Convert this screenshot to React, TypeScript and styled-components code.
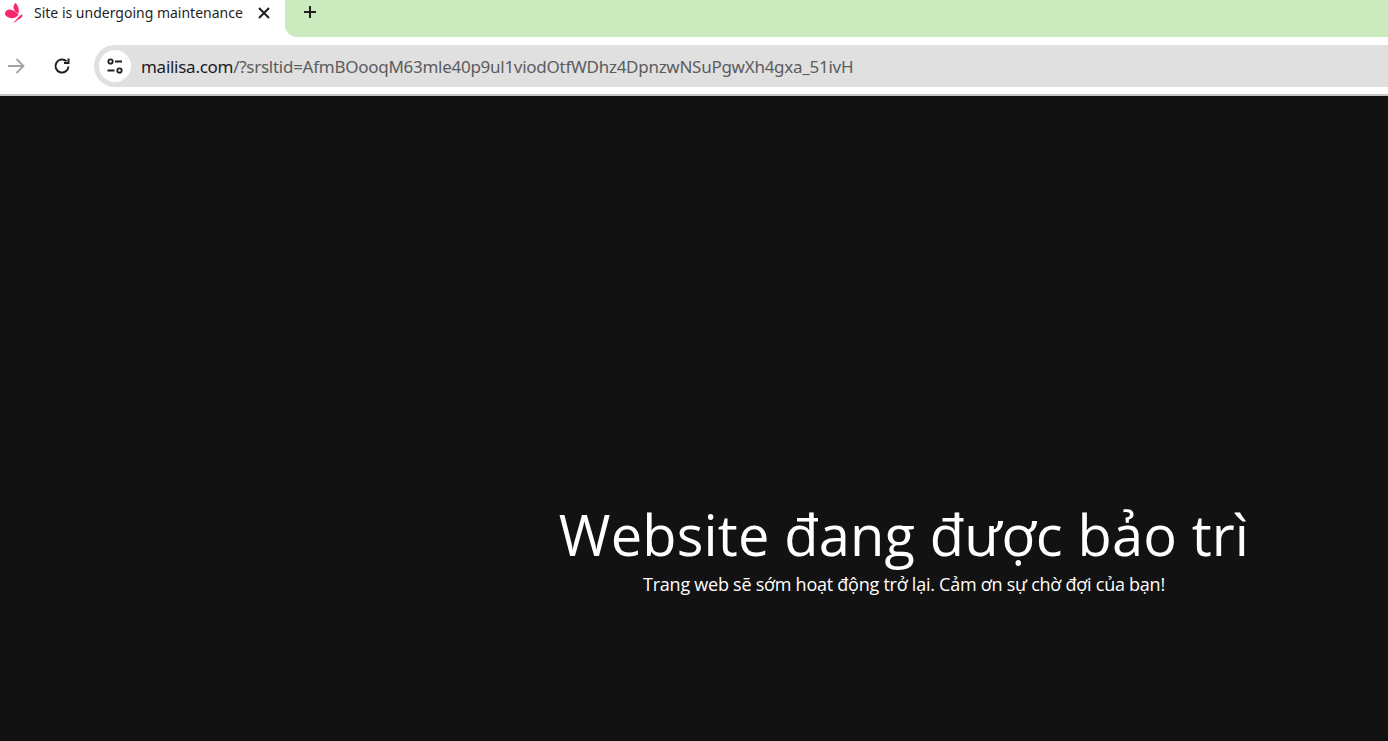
import React from 'react';
import styled, { createGlobalStyle } from 'styled-components';

const GlobalStyle = createGlobalStyle`
  html, body {
    margin: 0;
    padding: 0;
    height: 100%;
    background: #121212;
    overflow: hidden;
  }
`;

const Page = styled.div`
  width: 1388px;
  height: 741px;
  display: flex;
  flex-direction: column;
  font-family: 'Open Sans', sans-serif;
`;

const TabStrip = styled.div`
  height: 37px;
  background: #cbeabd;
  display: flex;
  align-items: flex-start;
`;

const ActiveTab = styled.div`
  position: relative;
  width: 285px;
  height: 37px;
  box-sizing: border-box;
  background: #fff;
  display: flex;
  align-items: center;
  padding: 0 14px 12px 5px;
`;

const TabCorner = styled.span`
  position: absolute;
  right: -12px;
  bottom: 0;
  width: 12px;
  height: 12px;
  background: #fff;

  &::after {
    content: '';
    position: absolute;
    inset: 0;
    background: #cbeabd;
    border-bottom-left-radius: 12px;
  }
`;

const TabTitle = styled.span`
  margin-left: 11px;
  flex: 1;
  font-family: 'Noto Sans', sans-serif;
  font-size: 14px;
  color: #1f1f1f;
  white-space: nowrap;
`;

const NewTab = styled.button`
  margin: 2px 0 0 15px;
  padding: 0;
  width: 20px;
  height: 20px;
  border: 0;
  background: none;
  display: flex;
`;

const Toolbar = styled.div`
  height: 59px;
  box-sizing: border-box;
  padding: 8px 0 7px 6px;
  background: #fff;
  border-bottom: 2px solid #c4c4c4;
  display: flex;
  align-items: center;
`;

const NavIcon = styled.span<{ $gap: number }>`
  display: flex;
  margin-right: ${(p) => p.$gap}px;
`;

const AddressBar = styled.div`
  flex: 1;
  height: 42px;
  background: #e0e0e0;
  border-radius: 21px 0 0 21px;
  display: flex;
  align-items: center;
  padding-left: 5px;
`;

const SiteInfo = styled.span`
  width: 32px;
  height: 32px;
  border-radius: 50%;
  background: #fff;
  display: flex;
  align-items: center;
  justify-content: center;
  margin-right: 10px;
`;

const Url = styled.span`
  font-family: 'Noto Sans', sans-serif;
  font-size: 17px;
  color: #5c5c5c;
  white-space: nowrap;
  letter-spacing: -0.27px;

  b {
    font-weight: 400;
    color: #1b1b1f;
  }
`;

const Main = styled.main`
  flex: 1;
  background: #121212;
  color: #fff;
  padding: 400px 0 0 420px;
  box-sizing: border-box;
  text-align: center;
`;

const Heading = styled.h1`
  margin: 0;
  font-size: 56px;
  line-height: 76px;
  font-weight: 400;
  letter-spacing: 0.15px;
`;

const Message = styled.p`
  margin: 0;
  font-size: 18px;
  line-height: 24px;
  letter-spacing: -0.25px;
`;

const Butterfly = () => (
  <svg width="18" height="22" viewBox="0 0 18 22" fill="#f9266f">
    <path d="M10.500 1c2.300 2 3.800 5.500 3.300 10.500-3-1-5.300-3.500-5.300-6.200C8.500 3.600 9.300 2 10.500 1z" />
    <path d="M0 11c.5-2.300 3-3.800 6-3.300 3 .5 6 2.800 7.500 5-1.500 2-4 3.800-7 3.500C3 15.900-.5 13.500 0 11z" />
    <path d="M8 20.500c2.500-1.500 3.800-3.300 5-5 1.300-1.500 3-2.700 4.500-3.200.2 2-1 3.800-3 4.700-2 1-3.500 2.500-5.500 3.500H8z" />
  </svg>
);

export default function App() {
  return (
    <Page>
      <GlobalStyle />
      <TabStrip>
        <ActiveTab>
          <Butterfly />
          <TabTitle>Site is undergoing maintenance</TabTitle>
          <svg width="14" height="14" viewBox="0 0 14 14" fill="none" stroke="#1f1f1f" strokeWidth="2">
            <path d="M2 2l10 10M12 2L2 12" />
          </svg>
          <TabCorner />
        </ActiveTab>
        <NewTab>
          <svg width="20" height="20" viewBox="0 0 20 20" fill="none" stroke="#1f1f1f" strokeWidth="2">
            <path d="M10 4v12M4 10h12" />
          </svg>
        </NewTab>
      </TabStrip>
      <Toolbar>
        <NavIcon $gap={26}>
          <svg width="20" height="20" viewBox="0 0 20 20" fill="none" stroke="#a3a3a3" strokeWidth="1.800">
            <path d="M2 10h15M10.500 3l7 7-7 7" />
          </svg>
        </NavIcon>
        <NavIcon $gap={22}>
          <svg width="20" height="20" viewBox="0 0 20 20" fill="none" stroke="#1f1f1f" strokeWidth="2">
            <path d="M16.500 10.500a6.500 6.500 0 1 1-2-5.200" />
            <path d="M16.500 2.500v4.500H12" />
          </svg>
        </NavIcon>
        <AddressBar>
          <SiteInfo>
            <svg width="18" height="18" viewBox="0 0 18 18" fill="none" stroke="#1f1f1f" strokeWidth="1.800">
              <circle cx="4.500" cy="4.500" r="2.200" />
              <path d="M9 4.500h7M1.500 13.500h7" />
              <circle cx="13.500" cy="13.500" r="2.200" />
            </svg>
          </SiteInfo>
          <Url>
            <b>mailisa.com</b>/?srsltid=AfmBOooqM63mle40p9ul1viodOtfWDhz4DpnzwNSuPgwXh4gxa_51ivH
          </Url>
        </AddressBar>
      </Toolbar>
      <Main>
        <Heading>Website đang được bảo trì</Heading>
        <Message>Trang web sẽ sớm hoạt động trở lại. Cảm ơn sự chờ đợi của bạn!</Message>
      </Main>
    </Page>
  );
}
